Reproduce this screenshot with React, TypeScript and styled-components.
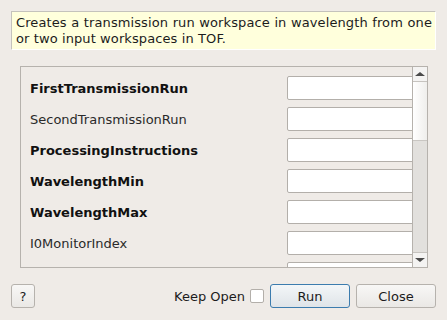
import styled, { createGlobalStyle } from "styled-components";

const GlobalStyle = createGlobalStyle`
  html, body {
    margin: 0;
    padding: 0;
    background: #efebe7;
  }
  body {
    font-family: "DejaVu Sans", "Liberation Sans", sans-serif;
    font-size: 13px;
    color: #1c1c1c;
  }
`;

type Field = { name: string; required?: boolean };

// last row is only peeking in at the bottom, so its label stays empty
const fields: Field[] = [
  { name: "FirstTransmissionRun", required: true },
  { name: "SecondTransmissionRun" },
  { name: "ProcessingInstructions", required: true },
  { name: "WavelengthMin", required: true },
  { name: "WavelengthMax", required: true },
  { name: "I0MonitorIndex" },
  { name: "" },
];

const App = () => {
  return (
    <>
      <GlobalStyle />
      <Dialog>
        <Description>
          Creates a transmission run workspace in wavelength from one or two input workspaces in TOF.
        </Description>

        <ScrollArea>
          <Viewport>
            {fields.map((f, i) => (
              <Row key={i}>
                <Label $bold={f.required}>{f.name}</Label>
                <Input />
              </Row>
            ))}
          </Viewport>
          <ScrollBar>
            <ArrowButton>
              <Arrow $up />
            </ArrowButton>
            <Track>
              <Handle />
            </Track>
            <ArrowButton>
              <Arrow />
            </ArrowButton>
          </ScrollBar>
        </ScrollArea>

        <ButtonBar>
          <HelpButton>?</HelpButton>
          <Spacer />
          <KeepOpen>
            Keep Open
            <CheckBox />
          </KeepOpen>
          <Button $primary>Run</Button>
          <Button>Close</Button>
        </ButtonBar>
      </Dialog>
    </>
  );
};

const Dialog = styled.div`
  width: 447px;
  height: 320px;
  box-sizing: border-box;
  padding: 11px 11px 12px 11px;
  display: flex;
  flex-direction: column;
`;

const Description = styled.div`
  height: 39px;
  box-sizing: border-box;
  background: #ffffdc;
  border: 1px solid #c4c2bc;
  border-right-color: #ffffff;
  border-bottom-color: #ffffff;
  padding: 0 3px 0 4px;
  line-height: 16px;
  display: flex;
  align-items: center;
  text-align: justify;
  letter-spacing: 0.1px;
`;

const ScrollArea = styled.div`
  margin: 16px 8px 0 9px;
  height: 202px;
  box-sizing: border-box;
  border: 1px solid #b6b2ad;
  display: flex;
  overflow: hidden;
`;

const Viewport = styled.div`
  flex: 1;
  overflow: hidden;
  padding: 9px 0 0 9px;
  display: flex;
  flex-direction: column;
  gap: 7px;
`;

const Row = styled.div`
  display: flex;
  align-items: center;
  height: 24px;
  flex-shrink: 0;
`;

const Label = styled.span<{ $bold?: boolean }>`
  width: 257px;
  flex-shrink: 0;
  font-weight: ${(p) => (p.$bold ? "bold" : "normal")};
  color: ${(p) => (p.$bold ? "#111" : "#2a2a2a")};
  white-space: nowrap;
  overflow: hidden;
`;

const Input = styled.div`
  width: 140px;
  flex-shrink: 0;
  height: 24px;
  box-sizing: border-box;
  background: #ffffff;
  border: 1px solid #b3afaa;
  border-radius: 2px;
`;

const ScrollBar = styled.div`
  width: 14px;
  flex-shrink: 0;
  border-left: 1px solid #b6b2ad;
  display: flex;
  flex-direction: column;
  background: #e2e0dd;
`;

const ArrowButton = styled.div`
  height: 14px;
  flex-shrink: 0;
  background: #f4f3f2;
  display: flex;
  align-items: center;
  justify-content: center;
  &:first-child {
    border-bottom: 1px solid #c6c3bf;
  }
  &:last-child {
    border-top: 1px solid #c6c3bf;
  }
`;

const Arrow = styled.div<{ $up?: boolean }>`
  width: 0;
  height: 0;
  border-left: 5px solid transparent;
  border-right: 5px solid transparent;
  ${(p) =>
    p.$up
      ? "border-bottom: 4px solid #4a4a4a;"
      : "border-top: 4px solid #4a4a4a;"}
`;

const Track = styled.div`
  flex: 1;
  display: flex;
  flex-direction: column;
`;

const Handle = styled.div`
  height: 58px;
  background: linear-gradient(to right, #ffffff, #efeeec);
  border-bottom: 1px solid #c9c6c2;
`;

const ButtonBar = styled.div`
  margin-top: 16px;
  height: 24px;
  display: flex;
  align-items: center;
`;

const Spacer = styled.div`
  flex: 1;
`;

const Button = styled.button<{ $primary?: boolean }>`
  width: 80px;
  height: 24px;
  margin-left: 6px;
  box-sizing: border-box;
  font-family: inherit;
  font-size: 13px;
  color: #1c1c1c;
  border-radius: 3px;
  padding: 0;
  border: 1px solid ${(p) => (p.$primary ? "#3c7cae" : "#b6b2ad")};
  background: ${(p) =>
    p.$primary
      ? "linear-gradient(#f3f6f8, #dfe4e8)"
      : "linear-gradient(#f8f7f6, #eae8e5)"};
`;

const HelpButton = styled(Button)`
  width: 24px;
  margin-left: 0;
`;

const KeepOpen = styled.label`
  display: flex;
  align-items: center;
  gap: 5px;
`;

const CheckBox = styled.span`
  width: 14px;
  height: 14px;
  box-sizing: border-box;
  background: #ffffff;
  border: 1px solid #b3afaa;
  border-radius: 2px;
`;

export default App;
